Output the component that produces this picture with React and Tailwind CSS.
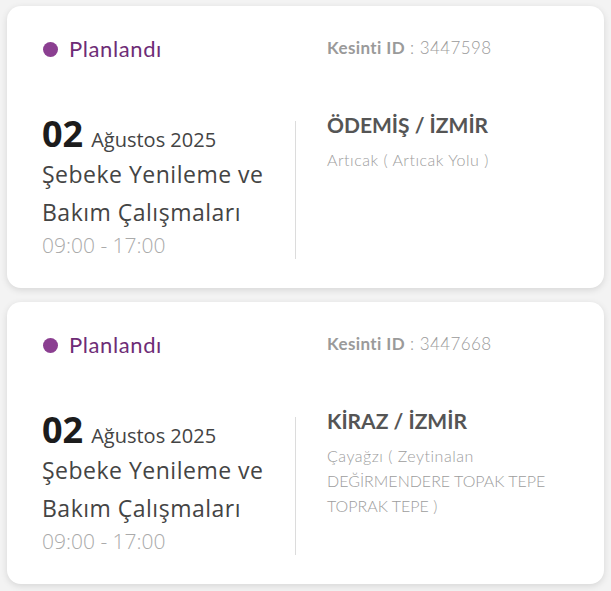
import React from "react";

const outages = [
  {
    id: "3447598",
    day: "02",
    month: "Ağustos 2025",
    title: ["Şebeke Yenileme ve", "Bakım Çalışmaları"],
    time: "09:00 - 17:00",
    place: "ÖDEMİŞ / İZMİR",
    detail: "Artıcak ( Artıcak Yolu )",
  },
  {
    id: "3447668",
    day: "02",
    month: "Ağustos 2025",
    title: ["Şebeke Yenileme ve", "Bakım Çalışmaları"],
    time: "09:00 - 17:00",
    place: "KİRAZ / İZMİR",
    detail: "Çayağzı ( Zeytinalan DEĞİRMENDERE TOPAK TEPE TOPRAK TEPE )",
  },
];

// büyük harfli kelimeler daha dar görünüyor, küçük harfliler biraz açık
function Detail({ text }) {
  const words = text.split(" ");
  return words.map((w, i) => {
    const upper = w === w.toLocaleUpperCase("tr") && /[A-ZÇĞİÖŞÜ]/.test(w);
    return (
      <span key={i} className={upper ? "tracking-normal" : "tracking-[0.5px]"}>
        {w}
        {i < words.length - 1 ? " " : ""}
      </span>
    );
  });
}

function OutageCard({ o }) {
  return (
    <div className="bg-white rounded-[14px] shadow-[0_2px_7px_rgba(0,0,0,0.12)] px-[35px] pt-[27px] pb-[29px]">
      {/* durum + kesinti id */}
      <div className="grid grid-cols-[254px_1fr]">
        <div className="flex items-center gap-[11px] font-['Lato',sans-serif]">
          <span className="w-[15px] h-[15px] rounded-full bg-[#8b3f91] ml-[1px]" />
          <span className="text-[22px] tracking-[0.6px] text-[#6e2c76] leading-[32px]">Planlandı</span>
        </div>
        <div className="pl-[31px] font-['Lato',sans-serif] text-[17px] tracking-[0.4px] leading-[30px] text-[#9a9a9a]">
          <span className="font-bold">Kesinti ID</span>
          <span className="font-light"> : {o.id}</span>
        </div>
      </div>

      {/* tarih / yer */}
      <div className="grid grid-cols-[253px_1px_1fr] mt-[52px]">
        <div className="font-['Open_Sans',sans-serif]">
          <div className="flex items-baseline gap-[8px] h-[38px] leading-[34px]">
            <span className="text-[36px] font-bold text-[#1c1c1c]">{o.day}</span>
            <span className="text-[20px] text-[#444]">{o.month}</span>
          </div>
          <div className="text-[23px] tracking-[0.5px] leading-[38px] text-[#444]">
            {o.title.map((t) => (
              <div key={t}>{t}</div>
            ))}
          </div>
          <div className="text-[21px] leading-[28px] font-light text-[#aaaaaa]">{o.time}</div>
        </div>
        <div className="bg-[#dcdcdc] mt-[4px]" />
        <div className="pl-[31px] font-['Lato',sans-serif]">
          <div className="text-[21px] font-bold text-[#555] leading-[20px] -mt-[2px]">{o.place}</div>
          <div className="text-[16px] text-[#9d9d9d] leading-[25px] mt-[12px] font-light">
            <Detail text={o.detail} />
          </div>
        </div>
      </div>
    </div>
  );
}

export default function App() {
  return (
    <div className="w-[611px] min-h-[591px] bg-[#f3f3f3] px-[7px] pt-[6px] flex flex-col gap-[14px]">
      {outages.map((o) => (
        <OutageCard key={o.id} o={o} />
      ))}
    </div>
  );
}
